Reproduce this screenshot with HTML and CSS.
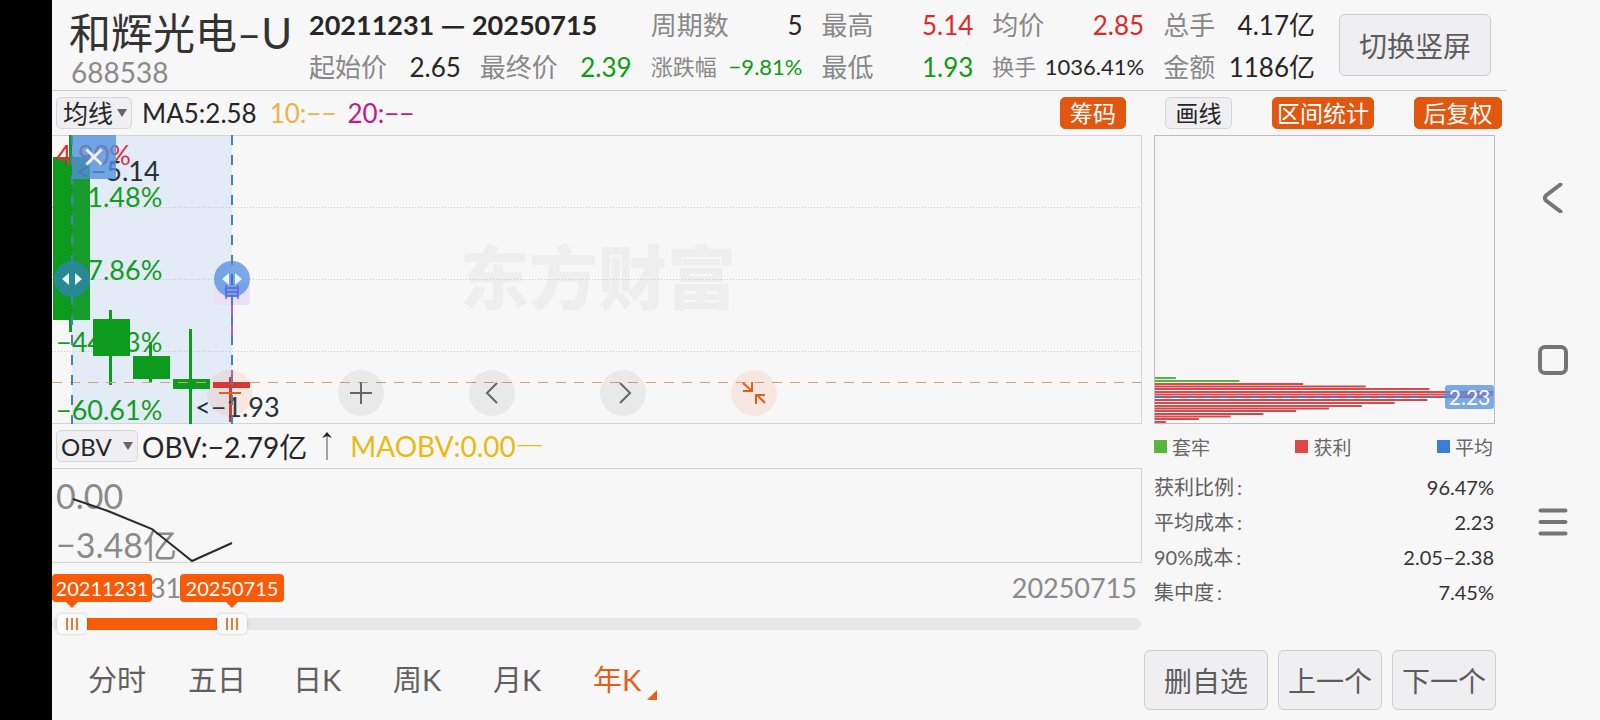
FILE: index.html
```html
<!DOCTYPE html>
<html lang="zh-CN">
<head>
<meta charset="utf-8">
<title>和辉光电–U 688538</title>
<link rel="stylesheet" href="styles.css">
</head>
<body>
<div class="notch"></div>
<main class="app">
  <header class="header">
    <div class="stock">
      <h1 class="stock-name">和辉光电–U</h1>
      <div class="stock-code">688538</div>
    </div>
    <div class="stats">
      <div class="range">20211231 <span class="dash">—</span> 20250715</div>
      <div class="stat"><span>周期数</span><b>5</b></div>
      <div class="stat"><span>最高</span><b class="up">5.14</b></div>
      <div class="stat"><span>均价</span><b class="up">2.85</b></div>
      <div class="stat"><span>总手</span><b>4.17亿</b></div>
      <div class="stat"><span>起始价</span><b>2.65</b></div>
      <div class="stat"><span>最终价</span><b class="down">2.39</b></div>
      <div class="stat small"><span>涨跌幅</span><b class="down">−9.81%</b></div>
      <div class="stat"><span>最低</span><b class="down">1.93</b></div>
      <div class="stat small"><span>换手</span><b>1036.41%</b></div>
      <div class="stat"><span>金额</span><b>1186亿</b></div>
    </div>
    <button class="btn rotate" type="button">切换竖屏</button>
  </header>

  <div class="toolbar">
    <div class="legend-row ma-row">
      <label class="picker"><select class="picker-select ma" aria-label="主图指标"><option>均线</option></select></label>
      <span class="ma5">MA5:2.58</span>
      <span class="ma10">10:−−</span>
      <span class="ma20">20:−−</span>
      <button class="chip on chips-toggle" type="button">筹码</button>
    </div>
    <div class="tools">
      <button class="chip line-tool" type="button">画线</button>
      <button class="chip on" type="button">区间统计</button>
      <button class="chip on adjust" type="button">后复权</button>
    </div>
  </div>

  <div class="body">
    <section class="charts">
      <div class="kline">
        <svg class="kline-svg" width="100%" height="289" role="img" aria-label="年K线图">
          <text class="watermark" x="408" y="169">东方财富</text>
          <rect class="zone" x="20" y="0" width="160" height="289"/>
          <g class="grid">
            <line x1="0" y1="72.5" x2="100%" y2="72.5"/>
            <line x1="0" y1="144.5" x2="100%" y2="144.5"/>
            <line x1="0" y1="216.5" x2="100%" y2="216.5"/>
          </g>
          <path class="frame" d="M0 .5H4000M0 288.5H4000"/>
          <g class="axis">
            <text x="4" y="72">−11.48%</text>
            <text x="4" y="145">−27.86%</text>
            <text x="4" y="217">−44.23%</text>
            <text x="4" y="285">−60.61%</text>
          </g>
          <g class="fall">
            <rect x="1" y="22" width="37" height="163"/><rect x="17" y="0" width="3" height="197"/>
            <rect x="41" y="184" width="37" height="37"/><rect x="57" y="175" width="3" height="75"/>
            <rect x="81" y="221" width="37" height="23"/><rect x="97" y="207" width="3" height="40"/>
            <rect x="121" y="244" width="37" height="10"/><rect x="137" y="194" width="3" height="95"/>
          </g>
          <rect class="tint" x="20" y="22" width="18" height="163"/>
          <line class="last" x1="0" y1="247.5" x2="100%" y2="247.5"/>
          <g class="rise"><rect x="161" y="247" width="37" height="6"/><rect x="177" y="242" width="3" height="45"/></g>
          <text class="pct-top" x="4" y="30">4.90%</text>
          <text class="extreme" x="23" y="46">&lt;−5.14</text>
          <text class="extreme" x="143" y="282">&lt;−1.93</text>
          <rect x="162" y="148" width="36" height="22" rx="4" fill="#ecdff8"/>
          <path d="M180 170v120" stroke="#b45fc4" stroke-width="2" stroke-dasharray="12 8 10 35 12 200"/>
          <path class="edge" d="M20 0V289M180 0V289"/>
          <circle class="knob knob-from" cx="20" cy="144" r="18"/>
          <circle class="knob" cx="180" cy="144" r="18"/>
          <path d="M174 150v14M186 150v14M174 153h12M174 157h12M174 161h12" stroke="#5a62e0" stroke-width="1.5" fill="none"/>
          <path d="M180 139v11" stroke="#3f6fd0" stroke-width="2"/>
          <path d="M17 138v12l-7-6zM23 138v12l7-6zM177 138v12l-7-6zM183 138v12l7-6z" fill="#e9f3fb"/>
        </svg>
        <button class="close" type="button" aria-label="关闭区间统计"><svg width="18" height="18" viewBox="0 0 18 18"><path d="M1.500 1.500l15 15M16.500 1.500l-15 15" stroke="#eef3fb" stroke-width="3"/></svg></button>
        <div class="controls">
          <button class="round hot" type="button" aria-label="缩小"><svg width="24" height="24" viewBox="0 0 24 24"><path d="M1 12h22"/></svg></button>
          <button class="round" type="button" aria-label="放大"><svg width="24" height="24" viewBox="0 0 24 24"><path d="M1 12h22M12 1v22"/></svg></button>
          <button class="round" type="button" aria-label="左移"><svg width="24" height="24" viewBox="0 0 24 24"><path d="M17 2L7 12l10 10"/></svg></button>
          <button class="round" type="button" aria-label="右移"><svg width="24" height="24" viewBox="0 0 24 24"><path d="M9 2l10 10L9 22"/></svg></button>
          <button class="round hot" type="button" aria-label="退出全屏"><svg width="24" height="24" viewBox="0 0 24 24"><path d="M1 2l9 8M10 1v9H1M23 22l-8-8M14 23v-9h9"/></svg></button>
        </div>
      </div>

      <div class="legend-row obv-row">
        <label class="picker"><select class="picker-select obv" aria-label="副图指标"><option>OBV</option></select></label>
        <span class="obv-value">OBV:−2.79亿</span>
        <svg class="arrow" width="12" height="28" viewBox="0 0 12 28"><path d="M6 3v25" stroke="#888" stroke-width="1.500"/><path d="M6 0l5 6-5-2-5 2z" fill="#222"/></svg>
        <span class="maobv">MAOBV:0.00<span class="dash">—</span></span>
      </div>

      <svg class="obv-svg" width="100%" height="95" role="img" aria-label="OBV">
        <path class="frame" d="M0 .5H4000M0 94.500H4000"/>
        <text x="4" y="41">0.00</text>
        <text x="4" y="90">−3.48亿</text>
        <polyline points="21,31 56,43 100,61 140,93 180,75"/>
      </svg>

      <div class="dates">
        <span>20211231</span><span>20250715</span>
        <output class="tag tag-from">20211231</output>
        <output class="tag tag-to">20250715</output>
      </div>
      <div class="slider">
        <input type="range" min="0" max="1060" value="5" aria-label="开始日期">
        <input type="range" min="0" max="1060" value="165" aria-label="结束日期">
      </div>
    </section>

    <aside class="chips">
      <div class="dist">
        <svg class="dist-svg" viewBox="0 0 341 287" width="100%" height="287" preserveAspectRatio="none" role="img" aria-label="筹码分布">
          <path d="M0 242h21M0 245h85" stroke="#58b345" stroke-width="2"/>
          <path d="M0 248h149M0 253h276M0 256h340M0 258.500h340M0 261h336M0 267h241M0 270h208M0 275h142M0 280.500h76M0 283h44M0 286h11" stroke="#df4848" stroke-width="2"/>
          <path d="M0 250.500h212M0 264h274M0 272.500h175M0 278h109" stroke="#c94a4d" stroke-width="2"/>
          <path d="M0 261h300" stroke="#3b7ddd" stroke-width="2" stroke-dasharray="8 8"/>
        </svg>
        <span class="avg">2.23</span>
      </div>
      <div class="keys">
        <span class="key trapped">套牢</span>
        <span class="key profit">获利</span>
        <span class="key mean">平均</span>
      </div>
      <dl class="facts">
        <div><dt>获利比例<i>:</i></dt><dd>96.47%</dd></div>
        <div><dt>平均成本<i>:</i></dt><dd>2.23</dd></div>
        <div><dt>90%成本<i>:</i></dt><dd>2.05−2.38</dd></div>
        <div><dt>集中度<i>:</i></dt><dd>7.45%</dd></div>
      </dl>
    </aside>
  </div>

  <footer class="footer">
    <nav class="tabs">
      <a href="#">分时</a><a href="#">五日</a><a href="#">日K</a><a href="#">周K</a><a href="#">月K</a><a href="#" class="active">年K</a>
    </nav>
    <div class="actions">
      <button class="btn wide" type="button">删自选</button>
      <button class="btn" type="button">上一个</button>
      <button class="btn" type="button">下一个</button>
    </div>
  </footer>
</main>

<nav class="system">
  <button type="button" aria-label="返回"><svg width="30" height="30" viewBox="0 0 30 30"><path d="M22.500 1.500L8 12.500q-2.500 2.500 0 5l14.500 11"/></svg></button>
  <button type="button" aria-label="主页"><svg width="30" height="30" viewBox="0 0 30 30"><rect x="2" y="2" width="26" height="26" rx="5"/></svg></button>
  <button type="button" aria-label="菜单"><svg width="30" height="30" viewBox="0 0 30 30"><path d="M2.500 3.500h25M2.500 15h25M2.500 26.500h25"/></svg></button>
</nav>
</body>
</html>
```

FILE: styles.css
```css
* { box-sizing: border-box; }

body {
  margin: 0;
  min-height: 100vh;
  display: flex;
  background: #f7f7f7;
  color: #262626;
  font-family: Lato, "Noto Sans CJK SC", sans-serif;
}

button, select, input { font: inherit; color: inherit; margin: 0; }
button { padding: 0; border: 0; background: none; cursor: pointer; }
svg { display: block; }
.dash { font-family: "Noto Sans CJK SC", sans-serif; line-height: 1; }

.notch { flex: 0 0 52px; background: #000; }
.app { flex: 1; min-width: 0; display: flex; flex-direction: column; }

/* Header */
.header {
  display: flex;
  align-items: flex-start;
  padding: 0 15px 0 17px;
  height: 91px;
  border-bottom: 1px solid #c9c9ce;
}
.stock { flex: 0 0 240px; white-space: nowrap; }
.stock-name { margin: 0; padding-top: 8px; font-size: 42px; line-height: 50px; font-weight: 400; color: #333; }
.stock-code { padding-left: 2px; font-size: 28px; line-height: 28px; color: #8a8a8a; }
.stats {
  flex: 1;
  display: grid;
  grid-template-columns: repeat(6, minmax(0, 1fr));
  grid-auto-rows: 42px;
  column-gap: 19px;
  padding-top: 4px;
  white-space: nowrap;
}
.range { grid-column: span 2; font-size: 27px; line-height: 42px; font-weight: 700; }
.stat { display: flex; justify-content: space-between; align-items: baseline; font-size: 26px; line-height: 42px; }
.stat span { color: #888; }
.stat b { font-weight: 400; font-size: 26px; }
.stat.small { font-size: 22px; }
.stat.small b { font-size: 22px; }
.stat .up { color: #dc2a2a; }
.stat .down { color: #0c9c12; }

.btn {
  min-width: 104px;
  height: 60px;
  border: 1px solid #cbcbd3;
  border-radius: 6px;
  background: #efeff2;
  color: #5c5c5c;
  font-size: 28px;
}
.btn.wide { min-width: 124px; }
.btn.rotate { flex: 0 0 152px; height: 62px; margin: 14px 0 0 24px; }

/* Toolbar */
.toolbar, .body {
  display: grid;
  grid-template-columns: minmax(0, 1fr) 341px;
  column-gap: 12px;
  padding-right: 11px;
}
.legend-row { display: flex; align-items: center; height: 44px; padding-left: 4px; font-size: 28px; white-space: nowrap; }
.ma-row { font-size: 26px; }
.picker { position: relative; display: block; margin-right: 10px; }
.picker::after {
  content: "";
  position: absolute;
  right: 5px;
  top: 12px;
  border: 5px solid transparent;
  border-top: 8px solid #666;
  border-bottom: 0;
  pointer-events: none;
}
.picker-select {
  appearance: none;
  display: block;
  height: 32px;
  padding: 0 0 0 6px;
  border: 1px solid #d5d5dc;
  border-radius: 5px;
  background: #efeff2;
}
.picker-select.ma { width: 76px; font-size: 25px; }
.picker-select.obv { width: 82px; padding-left: 4px; font-size: 24px; }
.ma5 { margin-right: 13px; }
.ma10 { margin-right: 11px; color: #eab545; }
.ma20 { color: #c4198a; }
.chips-toggle { margin: 0 16px 0 auto; width: 66px; }
.tools { display: flex; justify-content: space-between; align-items: center; padding-left: 11px; margin-right: -7px; }
.chip {
  height: 32px;
  padding: 0 4px;
  border: 1px solid #d5d5dc;
  border-radius: 5px;
  background: #efeff2;
  font-size: 23px;
  line-height: 28px;
}
.chip.on { border-color: #e1570f; background: #e1570f; color: #fff; }
.line-tool { width: 67px; }
.adjust { width: 88px; }

/* K-line */
.kline { position: relative; border-right: 1px solid #d4d4d4; }
.kline-svg text { font-size: 27px; }
.kline-svg .watermark { font-size: 69px; font-weight: 900; fill: #eeeeee; }
.frame { stroke: #d4d4d4; fill: none; }
.zone { fill: #e2ebf6; }
.grid { stroke: #c6c9cc; stroke-dasharray: 1 2; }
.axis { fill: #149c22; }
.fall { fill: #0c9b1c; }
.tint { fill: #2e9c54; fill-opacity: .3; }
.rise { fill: #cf3535; }
.last { stroke: #cfa174; stroke-dasharray: 10 8; }
.pct-top { fill: #dc3038; }
.extreme { fill: #2a303a; }
.edge { stroke: #4682b8; stroke-width: 2; stroke-dasharray: 10 10; }
.knob { fill: #4787de; fill-opacity: .7; }
.knob-from { fill: #2d86a6; fill-opacity: .85; }
.close {
  position: absolute;
  left: 20px;
  top: 0;
  width: 44px;
  height: 44px;
  background: rgba(80, 143, 224, .78);
  display: grid;
  place-items: center;
}
.controls { position: absolute; left: 155px; bottom: 8px; display: flex; gap: 85px; }
.round {
  width: 46px;
  height: 46px;
  border-radius: 50%;
  display: grid;
  place-items: center;
  background: rgba(120, 120, 120, .1);
}
.round path { fill: none; stroke: #666; stroke-width: 2; }
.round.hot { background: rgba(250, 110, 40, .1); }
.round.hot path { stroke: #e0601c; }

/* OBV */
.obv-row .picker { margin-right: 4px; }
.arrow { margin: 0 17px 0 14px; }
.maobv { color: #e8bb12; }
.obv-svg { border-right: 1px solid #d4d4d4; overflow: hidden; }
.obv-svg text { font-size: 34px; fill: #8a8a8a; }
.obv-svg polyline { fill: none; stroke: #2a2a2a; stroke-width: 2; }

/* Date range */
.dates {
  position: relative;
  display: flex;
  justify-content: space-between;
  height: 55px;
  padding: 0 5px 0 4px;
  font-size: 27px;
  line-height: 50px;
  color: #8a8a8a;
}
.tag {
  position: absolute;
  top: 11px;
  height: 28px;
  border-radius: 4px;
  background: #f85a08;
  color: #fff;
  font-size: 20px;
  line-height: 28px;
  text-align: center;
}
.tag::after {
  content: "";
  position: absolute;
  top: 28px;
  border: 6px solid transparent;
  border-top-color: #f85a08;
  border-bottom: 0;
}
.tag-from { left: 0; width: 100px; }
.tag-from::after { left: 14px; }
.tag-to { left: 128px; width: 104px; }
.tag-to::after { left: 46px; }
.slider {
  position: relative;
  height: 12px;
  margin-right: 1px;
  border-radius: 6px;
  background: linear-gradient(#f95a05, #f95a05) 20px 0 / 160px 100% no-repeat #e7e7e9;
}
.slider input {
  position: absolute;
  left: 0;
  top: -4px;
  width: 100%;
  height: 20px;
  appearance: none;
  background: none;
  pointer-events: none;
}
.slider input::-webkit-slider-thumb {
  appearance: none;
  pointer-events: auto;
  width: 30px;
  height: 20px;
  border-radius: 5px;
  box-shadow: 0 0 3px rgba(0, 0, 0, .2);
  background:
    linear-gradient(#e27b3c, #e27b3c) 9px 4px / 2px 12px no-repeat,
    linear-gradient(#e27b3c, #e27b3c) 14px 4px / 2px 12px no-repeat,
    linear-gradient(#e27b3c, #e27b3c) 19px 4px / 2px 12px no-repeat,
    #fafafa;
}

/* Chip distribution */
.dist { position: relative; border: 1px solid #bdbdbd; }
.avg {
  position: absolute;
  right: 0;
  bottom: 14px;
  width: 49px;
  height: 24px;
  border-radius: 3px;
  background: rgba(80, 143, 224, .75);
  color: #fff;
  font-size: 21px;
  line-height: 24px;
  text-align: center;
}
.keys { display: flex; justify-content: space-between; align-items: center; height: 44px; padding-right: 2px; color: #666; font-size: 19px; }
.key { display: flex; align-items: center; gap: 5px; }
.key::before { content: ""; width: 13px; height: 13px; }
.trapped::before { background: #5ab53e; }
.profit::before { background: #e04848; }
.mean::before { background: #3a7edb; }
.facts { margin: 2px 0 0; padding-right: 1px; font-size: 20px; line-height: 34px; }
.facts div { display: flex; justify-content: space-between; padding-bottom: 1px; }
.facts dt { color: #606060; }
.facts i { font-style: normal; margin-left: 3px; }
.facts dd { margin: 0; color: #333; }

/* Footer */
.footer { display: flex; justify-content: space-between; align-items: center; height: 80px; margin-top: auto; padding: 0 10px 0 15px; }
.tabs { display: flex; }
.tabs a { position: relative; width: 100px; text-align: center; font-size: 29px; line-height: 40px; color: #606060; text-decoration: none; }
.tabs .active { color: #e0601c; }
.tabs .active::after {
  content: "";
  position: absolute;
  right: 10px;
  bottom: 0;
  border: 5px solid #e0601c;
  border-top-color: transparent;
  border-left-color: transparent;
}
.actions { display: flex; gap: 10px; }

/* System navigation */
.system { flex: 0 0 94px; display: flex; flex-direction: column; justify-content: center; align-items: center; gap: 132px; }
.system svg { fill: none; stroke: #757575; stroke-width: 4; stroke-linecap: round; }
```
